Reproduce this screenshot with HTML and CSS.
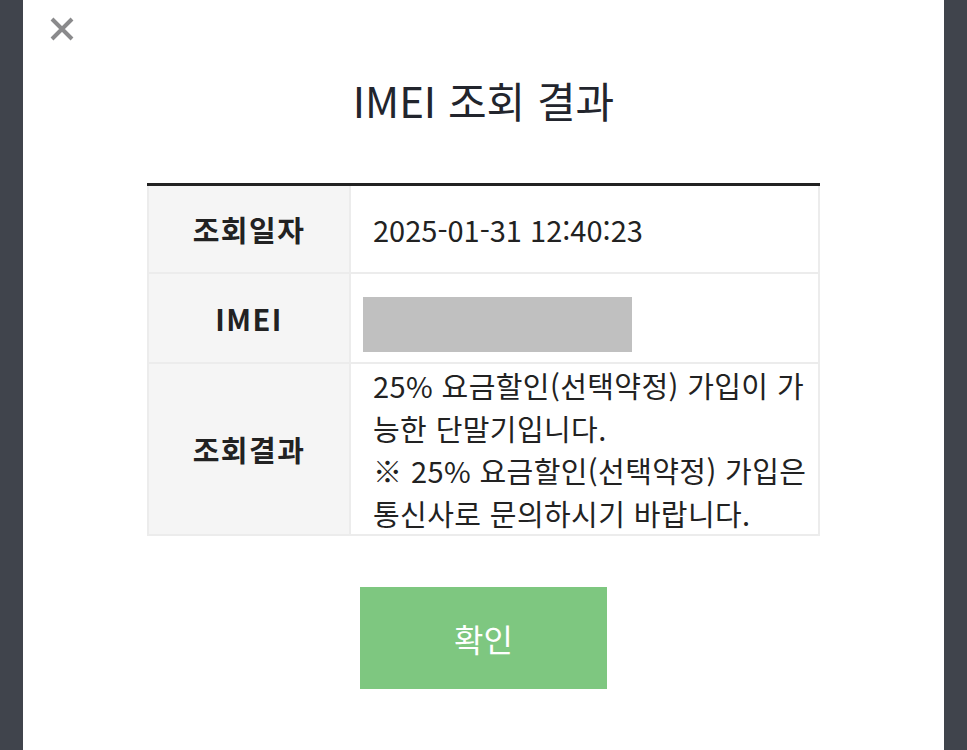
FILE: index.html
```html
<!DOCTYPE html>
<html lang="ko">
    <head>
        <meta charset="UTF-8" />
        <title>IMEI 조회 결과</title>
        <link rel="stylesheet" href="styles.css">
    </head>
    <body>
        <div class="modal">
            <a class="close_btn" href="#" aria-label="닫기">
                <svg width="26" height="26" viewBox="0 0 26 26">
                    <path d="M3 3 L23 23 M23 3 L3 23" stroke="#8a8a8c" stroke-width="4" stroke-linecap="butt" fill="none"/>
                </svg>
            </a>
            <h1 class="modal_title">IMEI 조회 결과</h1>
            <table class="result_table">
                <tr class="row_date">
                    <th>조회일자</th>
                    <td>2025-01-31 12:40:23</td>
                </tr>
                <tr class="row_imei">
                    <th>IMEI</th>
                    <td><div class="masked"></div></td>
                </tr>
                <tr class="row_result">
                    <th>조회결과</th>
                    <td class="result_text">25% 요금할인(선택약정) 가입이 가능한 단말기입니다.<br />※ 25% 요금할인(선택약정) 가입은 통신사로 문의하시기 바랍니다.</td>
                </tr>
            </table>
            <div class="btn_wrap">
                <button class="btn_ok" type="button">확인</button>
            </div>
        </div>
    </body>
</html>
```

FILE: styles.css
```css
html, body {
    margin: 0;
    padding: 0;
}
body {
    background-color: #40444c;
    font-family: "Noto Sans CJK KR", "Noto Sans", sans-serif;
    color: #222;
}
.modal {
    position: relative;
    width: 921px;
    min-height: 750px;
    margin: 0 auto;
    background-color: #fff;
    overflow: hidden;
}
.close_btn {
    position: absolute;
    left: 26px;
    top: 16px;
    display: block;
    width: 26px;
    height: 26px;
}
.close_btn svg { display: block; }
.modal_title {
    margin: 74px 0 0 0;
    font-size: 42px;
    font-weight: normal;
    line-height: 52px;
    text-align: center;
    color: #22252d;
}
.result_table {
    width: 673px;
    margin: 57px auto 0 auto;
    border-collapse: collapse;
    border-top: 3px solid #222;
    table-layout: fixed;
}
.result_table th,
.result_table td {
    border: 2px solid #ececec;
    font-size: 29px;
    vertical-align: middle;
}
.result_table th {
    width: 198px;
    background-color: #f5f5f5;
    font-weight: bold;
    color: #222;
    text-align: center;
    letter-spacing: 1.5px;
}
.result_table td {
    padding: 0 22px;
    text-align: left;
    color: #222;
}
.row_date th, .row_date td { height: 84px; }
.row_imei th, .row_imei td { height: 86px; }
.masked {
    width: 269px;
    height: 55px;
    margin: 12px 0 0 -10px;
    background-color: #c0c0c0;
}
.result_table td.result_text {
    height: 166px;
    line-height: 42.5px;
    padding: 0 8px 0 22px;
    letter-spacing: 0.4px;
}
.btn_wrap {
    text-align: center;
    margin-top: 51px;
}
.btn_ok {
    width: 247px;
    height: 102px;
    border: none;
    background-color: #7ec780;
    color: #fff;
    font-family: "Noto Sans CJK KR", "Noto Sans", sans-serif;
    font-size: 32px;
    cursor: pointer;
}
```
